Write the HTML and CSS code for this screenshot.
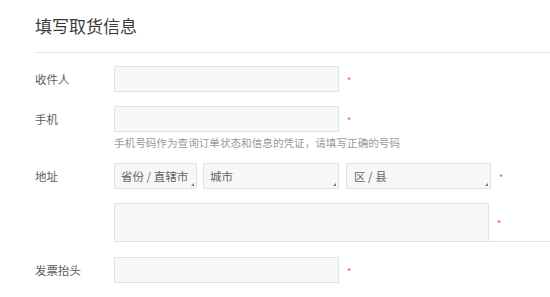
FILE: index.html
```html
<!DOCTYPE html>
<html lang="zh-CN">
<head>
<meta charset="utf-8">
<title>填写取货信息</title>
<link rel="stylesheet" href="styles.css">
</head>
<body>
<div class="page">
  <h1 class="title">填写取货信息</h1>
  <div class="rule"></div>
  <div class="row">
    <div class="label">收件人</div>
    <div class="input"></div>
    <span class="star">*</span>
  </div>
  <div class="row row-top">
    <div class="label">手机</div>
    <div class="field">
      <div class="line">
        <div class="input"></div>
        <span class="star">*</span>
      </div>
      <div class="hint">手机号码作为查询订单状态和信息的凭证，请填写正确的号码</div>
    </div>
  </div>
  <div class="row row-addr">
    <div class="label">地址</div>
    <div class="select s1">省份 / 直辖市</div>
    <div class="select s2">城市</div>
    <div class="select s3">区 / 县</div>
    <span class="star star-addr">*</span>
  </div>
  <div class="row row-area">
    <div class="label"></div>
    <div class="area"></div>
    <div class="tail"><span class="star">*</span></div>
  </div>
  <div class="row row-invoice">
    <div class="label">发票抬头</div>
    <div class="input"></div>
    <span class="star">*</span>
  </div>
</div>
</body>
</html>
```
FILE: styles.css
```css
html, body {
  margin: 0;
  padding: 0;
  background: #fff;
}
body {
  font-family: "Noto Sans CJK SC", "Noto Sans", sans-serif;
  color: #666;
  width: 550px;
  height: 297px;
  overflow: hidden;
}
.page {
  padding-left: 35px;
  padding-top: 14px;
}
.title {
  margin: 0;
  font-size: 17px;
  line-height: 24px;
  font-weight: normal;
  color: #3a3a3a;
}
.rule {
  margin-top: 14px;
  height: 1px;
  background: #e6e6e6;
}
.row {
  display: flex;
  align-items: center;
  margin-top: 13px;
}
.row-top {
  align-items: flex-start;
  margin-top: 14px;
}
.label {
  width: 79px;
  flex: none;
  font-size: 11.5px;
  line-height: 26px;
  color: #5c5c5c;
}
.input, .select, .area {
  box-sizing: border-box;
  height: 26px;
  background: #f7f7f7;
  border: 1px solid #e3e3e3;
  flex: none;
}
.input {
  width: 225px;
}
.star {
  margin-left: 8px;
  font-size: 9px;
  line-height: 10px;
  color: #e8546a;
  padding-top: 4px;
}
.field {
  display: flex;
  flex-direction: column;
}
.line {
  display: flex;
  align-items: center;
}
.hint {
  margin-top: 4px;
  font-size: 10.6px;
  line-height: 14px;
  color: #9a9a9a;
  white-space: nowrap;
}
.row-addr {
  margin-top: 13px;
}
.select {
  position: relative;
  font-size: 11.5px;
  line-height: 24px;
  color: #666;
  padding-left: 6px;
  white-space: pre;
}
.select::after {
  content: "";
  position: absolute;
  right: 2px;
  bottom: 2px;
  width: 0;
  height: 0;
  border-left: 3px solid transparent;
  border-bottom: 3px solid #777;
}
.s1 { width: 83px; }
.s2 { width: 136px; margin-left: 6px; }
.s3 { width: 145px; margin-left: 7px; padding-left: 7px; }
.row-area {
  margin-top: 14px;
  align-items: stretch;
}
.area {
  width: 375px;
  height: 39px;
}
.tail {
  flex: 1;
  display: flex;
  align-items: center;
  border-bottom: 1px solid #e3e3e3;
}
.row-invoice {
  margin-top: 15px;
}
```
